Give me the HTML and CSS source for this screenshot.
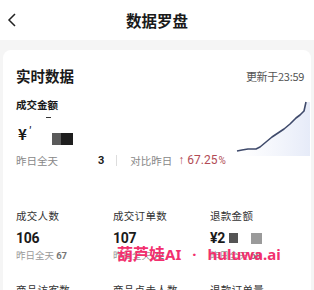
FILE: index.html
```html
<!DOCTYPE html>
<html lang="zh">
<head>
<meta charset="utf-8">
<link rel="stylesheet" href="styles.css">
</head>
<body>
<header class="nav">
  <svg class="back" width="10" height="14" viewBox="0 0 10 14"><path d="M8 1 L2 7 L8 13" fill="none" stroke="#222" stroke-width="1.5"/></svg>
  <div class="title">数据罗盘</div>
  <div></div>
</header>
<main class="page">
  <section class="card">
    <div class="head">
      <div class="h1">实时数据</div>
      <div class="upd">更新于23:59</div>
    </div>
    <div class="main">
      <div class="left">
        <div class="lbl-b">成交金额</div>
        <div class="amount">¥<span class="tick">′</span><span class="bar"></span><span class="blk g1"></span><span class="blk g2"></span></div>
        <div class="cmp"><span class="grey">昨日全天</span><span class="num3">3</span><span class="sep"></span><span class="grey">对比昨日</span><span class="up">↑ 67.25<span class="pct">%</span></span></div>
      </div>
      <svg class="chart" width="76" height="58" viewBox="0 0 76 58">
        <defs>
          <linearGradient id="fg" x1="0" y1="0" x2="1" y2="0">
            <stop offset="0" stop-color="#eef1fa" stop-opacity="0"/>
            <stop offset="1" stop-color="#e6ebf8" stop-opacity="1"/>
          </linearGradient>
        </defs>
        <path d="M3 53 L8 52 L14 51 L22 51 L26 49 L32 44 L38 39 L44 35 L50 31 L56 26 L62 20 L66 17 L70 13 L72 4 L76 4 L76 58 L3 58 Z" fill="url(#fg)"/>
        <path d="M3 53 L8 52 L14 51 L22 51 L26 49 L32 44 L38 39 L44 35 L50 31 L56 26 L62 20 L66 17 L70 13 L72 4" fill="none" stroke="#3f4a6b" stroke-width="1.6" stroke-linejoin="round"/>
      </svg>
    </div>
    <div class="grid">
      <div class="cell"><div class="lbl">成交人数</div><div class="val">106</div><div class="sub">昨日全天 <b>67</b></div></div>
      <div class="cell"><div class="lbl">成交订单数</div><div class="val">107</div><div class="sub">昨日全天 <b>72</b></div></div>
      <div class="cell"><div class="lbl">退款金额</div><div class="val">¥2<span class="blk g3"></span><span class="blk g4"></span></div><div class="sub">昨日全天 <b>68</b></div></div>
      <div class="cell"><div class="lbl">商品访客数</div></div>
      <div class="cell"><div class="lbl">商品点击人数</div></div>
      <div class="cell"><div class="lbl">退款订单量</div></div>
    </div>
  </section>
  <div class="wm"><span class="wcjk">葫芦娃</span>AI<span class="dot">·</span>huluwa.ai</div>
</main>
</body>
</html>
```
FILE: styles.css
```css
* { box-sizing: border-box; }
html, body { margin: 0; padding: 0; }
body {
  width: 314px; height: 290px; overflow: hidden;
  font-family: "Noto Sans CJK SC", "Noto Sans", sans-serif;
  color: #1a1a1a; background: #f5f5f5;
}
.nav {
  height: 40px; background: #fff;
  display: grid; grid-template-columns: 30px 1fr 30px; align-items: center;
}
.back { margin-left: 7px; }
.title { text-align: center; font-size: 15.5px; font-weight: 700; color: #1a1a1a; line-height: 22px; }
.page { position: relative; padding: 10px 3px 0; }
.card {
  background: #fff; border-radius: 8px;
  padding: 16px 7px 0 13px; height: 260px;
}
.head { display: flex; justify-content: space-between; align-items: center; height: 20px; }
.h1 { font-size: 14.5px; font-weight: 700; line-height: 20px; }
.upd { font-size: 11px; color: #555; line-height: 16px; letter-spacing: -0.3px; }
.main { display: flex; justify-content: space-between; align-items: flex-start; margin-top: 11px; }
.left { flex: 1; white-space: nowrap; min-width: 0; }
.lbl-b { font-size: 10.5px; font-weight: 700; line-height: 16px; }
.amount { margin-top: 11px; height: 20px; font-size: 15px; font-weight: 700; line-height: 20px; display: flex; align-items: center; padding-left: 2px; }
.tick { font-size: 11px; font-weight: 400; margin-left: 2px; align-self: flex-start; margin-top: -4px; }
.bar { width: 5px; height: 1px; background: #333; margin-left: 14px; align-self: flex-start; margin-top: -7px; }
.blk { display: inline-block; }
.g1 { width: 9px; height: 12px; background: #5a5a5a; margin-left: 1px; margin-top: 9px; }
.g2 { width: 12px; height: 12px; background: #1e1e1e; margin-top: 9px; }
.cmp { margin-top: 8px; display: flex; align-items: center; font-size: 10.5px; line-height: 16px; }
.grey { color: #888; }
.num3 { font-family: Roboto, sans-serif; font-weight: 700; margin-left: 40px; font-size: 11px; }
.sep { width: 1px; height: 11px; background: #ddd; margin: 0 13px 0 12px; }
.up { color: #b24b55; margin-left: 6px; font-family: Roboto, sans-serif; font-size: 12px; }
.pct { font-size: 10px; margin-left: 1px; }
.chart { margin-top: 1px; margin-right: -6px; flex: none; }
.grid {
  margin-top: 39px;
  display: grid; grid-template-columns: 97px 97px 1fr; row-gap: 20px;
}
.lbl { font-size: 10.5px; line-height: 16px; color: #333; letter-spacing: 0.3px; }
.val { margin-top: 5px; font-family: Roboto, sans-serif; font-size: 14px; font-weight: 700; line-height: 18px; display: flex; align-items: center; letter-spacing: -0.3px; }
.sub { margin-top: 1.5px; font-size: 9.5px; line-height: 13px; color: #999; }
.sub b { font-family: Roboto, sans-serif; color: #777; font-weight: 700; }
.g3 { width: 9px; height: 10px; background: #555; margin-left: 4px; }
.g4 { width: 11px; height: 11px; background: #9a9a9a; margin-left: 13px; }
.wm {
  position: absolute; left: 117px; top: 203px;
  font-family: "Noto Sans", "Noto Sans CJK SC", sans-serif; font-size: 15px; font-weight: 700;
  color: #f2306e; line-height: 20px; white-space: nowrap;
}
.wcjk { font-family: "Noto Sans CJK SC", sans-serif; font-size: 16px; }
.dot { margin: 0 11px; }
```
